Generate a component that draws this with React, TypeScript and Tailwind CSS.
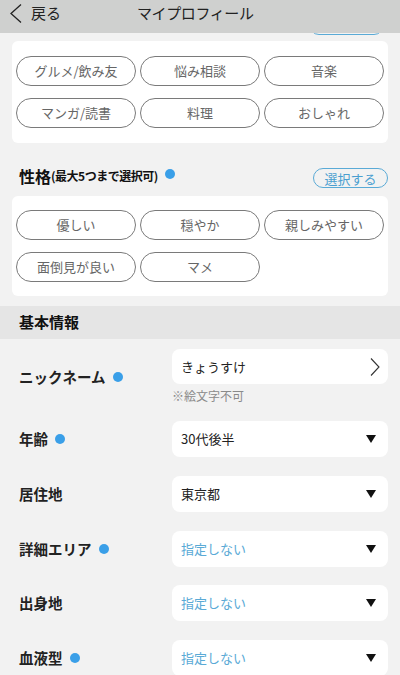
import React from "react";

const FONT = { fontFamily: '"Noto Sans CJK JP", "Noto Sans", sans-serif' };

function Chip({ label }: { label: string }) {
  return (
    <div className="h-[30px] rounded-full border border-[#7a7a7a] flex items-center justify-center text-[13px] text-[#666]">
      {label}
    </div>
  );
}

function Dot() {
  return <span className="inline-block w-[10px] h-[10px] rounded-full bg-[#3a9fe8] ml-[7px]" />;
}

function SelectButton({ className = "" }: { className?: string }) {
  return (
    <div
      className={`w-[75px] h-[20px] rounded-full border border-[#5aaad6] text-[#4a9fd0] text-[13px] flex items-center justify-center leading-none ${className}`}
    >
      選択する
    </div>
  );
}

function Triangle() {
  return (
    <svg width="10" height="8" viewBox="0 0 10 8" className="mr-[12px]">
      <polygon points="0,0 10,0 5,8" fill="#111" />
    </svg>
  );
}

function SelectRow({
  label,
  value,
  placeholder,
  dot,
  className = "",
}: {
  label: string;
  value: string;
  placeholder?: boolean;
  dot?: boolean;
  className?: string;
}) {
  return (
    <div className={`flex items-center pl-[19px] pr-[12px] ${className}`}>
      <div className="flex-1 flex items-center text-[14.5px] font-bold text-[#222]">
        {label}
        {dot && <Dot />}
      </div>
      <div className="w-[216px] h-[36px] bg-white rounded-[8px] flex items-center justify-between pl-[9px]">
        <span className={`text-[13px] ${placeholder ? "text-[#5aaad6]" : "text-[#222]"}`}>{value}</span>
        <Triangle />
      </div>
    </div>
  );
}

export default function App() {
  return (
    <div className="relative w-[400px] h-[675px] overflow-hidden bg-[#f2f2f2]" style={FONT}>
      {/* header overlay */}
      <div className="absolute top-0 left-0 right-0 h-[33px] bg-[#cfd0cf] flex items-start pt-[4px] z-10">
        <svg width="12" height="19" viewBox="0 0 12 19" className="ml-[10px]">
          <polyline points="11,0.5 1,9.5 11,18.5" fill="none" stroke="#222" strokeWidth="1.3" />
        </svg>
        <span className="ml-[9px] text-[15px] leading-[18px] text-[#222]">戻る</span>
        <span className="ml-[76px] text-[15px] leading-[18px] text-[#222] tracking-[-0.4px]">マイプロフィール</span>
      </div>

      {/* scroll content */}
      <div className="flex flex-col">
        <div className="flex justify-end pr-[16px] mt-[15px]">
          <SelectButton />
        </div>
        <div className="mx-[12px] mt-[6px] bg-white rounded-[6px] px-[4px] py-[15px] grid grid-cols-3 gap-x-[4px] gap-y-[12px]">
          {["グルメ/飲み友", "悩み相談", "音楽", "マンガ/読書", "料理", "おしゃれ"].map((t) => (
            <Chip key={t} label={t} />
          ))}
        </div>

        <div className="flex items-center justify-between pl-[19px] pr-[12px] mt-[25px]">
          <div className="flex items-center -mt-[4px]">
            <span className="text-[16px] font-bold text-[#111]">性格</span>
            <span className="text-[12px] font-bold text-[#111] tracking-[-0.5px]">(最大5つまで選択可)</span>
            <span className="inline-block w-[10px] h-[10px] rounded-full bg-[#3a9fe8] ml-[7px] -mt-[4px]" />
          </div>
          <SelectButton />
        </div>
        <div className="mx-[12px] mt-[8px] bg-white rounded-[6px] px-[4px] py-[14px] grid grid-cols-3 gap-x-[4px] gap-y-[12px]">
          {["優しい", "穏やか", "親しみやすい", "面倒見が良い", "マメ"].map((t) => (
            <Chip key={t} label={t} />
          ))}
        </div>

        <div className="mt-[10px] h-[33px] bg-[#e5e5e5] flex items-center pl-[19px] text-[15px] font-bold text-[#111]">
          基本情報
        </div>

        <div className="flex items-center pl-[19px] pr-[12px] mt-[10px]">
          <div className="flex-1 flex items-center text-[14.5px] font-bold text-[#222]">
            ニックネーム
            <Dot />
          </div>
          <div className="w-[216px] flex flex-col">
            <div className="h-[35px] bg-white rounded-[8px] flex items-center justify-between pl-[9px]">
              <span className="text-[13px] text-[#222]">きょうすけ</span>
              <svg width="10" height="18" viewBox="0 0 10 18" className="mr-[8px]">
                <polyline points="1,0.5 9,9 1,17.5" fill="none" stroke="#333" strokeWidth="1.1" />
              </svg>
            </div>
            <div className="mt-[4px] text-[12px] leading-[16px] text-[#8a8a8a]">※絵文字不可</div>
          </div>
        </div>

        <SelectRow label="年齢" value="30代後半" dot className="mt-[17px]" />
        <SelectRow label="居住地" value="東京都" className="mt-[19px]" />
        <SelectRow label="詳細エリア" value="指定しない" placeholder dot className="mt-[19px]" />
        <SelectRow label="出身地" value="指定しない" placeholder className="mt-[18px]" />
        <SelectRow label="血液型" value="指定しない" placeholder dot className="mt-[19px]" />
      </div>
    </div>
  );
}
